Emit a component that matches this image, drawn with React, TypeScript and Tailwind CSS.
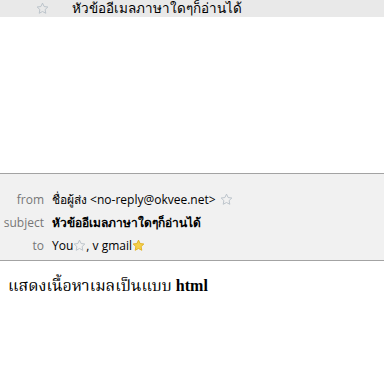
import React from "react";

const Star = ({ filled = false }: { filled?: boolean }) => (
  <svg width="13" height="13" viewBox="0 0 14 14" className="inline-block align-[-1px]">
    <path
      d="M7 1.2l1.75 3.7 4 .5-2.95 2.75.75 4L7 10.2l-3.55 1.95.75-4L1.25 5.4l4-.5z"
      fill={filled ? "#f5d04a" : "none"}
      stroke={filled ? "#e0b020" : "#b8c0c8"}
      strokeWidth="1"
      strokeLinejoin="round"
    />
  </svg>
);

export default function App() {
  return (
    <div className="w-[384px] h-[376px] bg-white font-['Open_Sans','Noto_Sans',sans-serif] text-[12px] text-black overflow-hidden">
      <div className="h-[17px] bg-[#e9e9e9] flex items-center">
        <div className="w-[72px] flex justify-start pl-[36px]">
          <Star />
        </div>
        <span className="text-[13.5px] leading-none">หัวข้ออีเมลภาษาใดๆก็อ่านได้</span>
      </div>
      <div className="h-[156px]" />
      <div className="border-t border-b border-[#a3a3a3] bg-[#f1f1f1] pt-[14px] pb-[3px]">
        <div className="grid grid-cols-[44px_1fr] gap-x-[8px] leading-[23px]">
          <span className="text-right text-[#777]">from</span>
          <span className="flex items-center gap-[4px]">
            ชื่อผู้ส่ง &lt;no-reply@okvee.net&gt;
            <Star />
          </span>
          <span className="text-right text-[#777]">subject</span>
          <span className="font-bold">หัวข้ออีเมลภาษาใดๆก็อ่านได้</span>
          <span className="text-right text-[#777]">to</span>
          <span className="flex items-center">
            You<Star />, v gmail<Star filled />
          </span>
        </div>
      </div>
      <div className="px-[8px] pt-[13px] font-['Liberation_Serif','Noto_Serif_Thai','DejaVu_Serif',serif] text-[16px]">
        แสดงเนื้อหาเมลเป็นแบบ <b>html</b>
      </div>
    </div>
  );
}
